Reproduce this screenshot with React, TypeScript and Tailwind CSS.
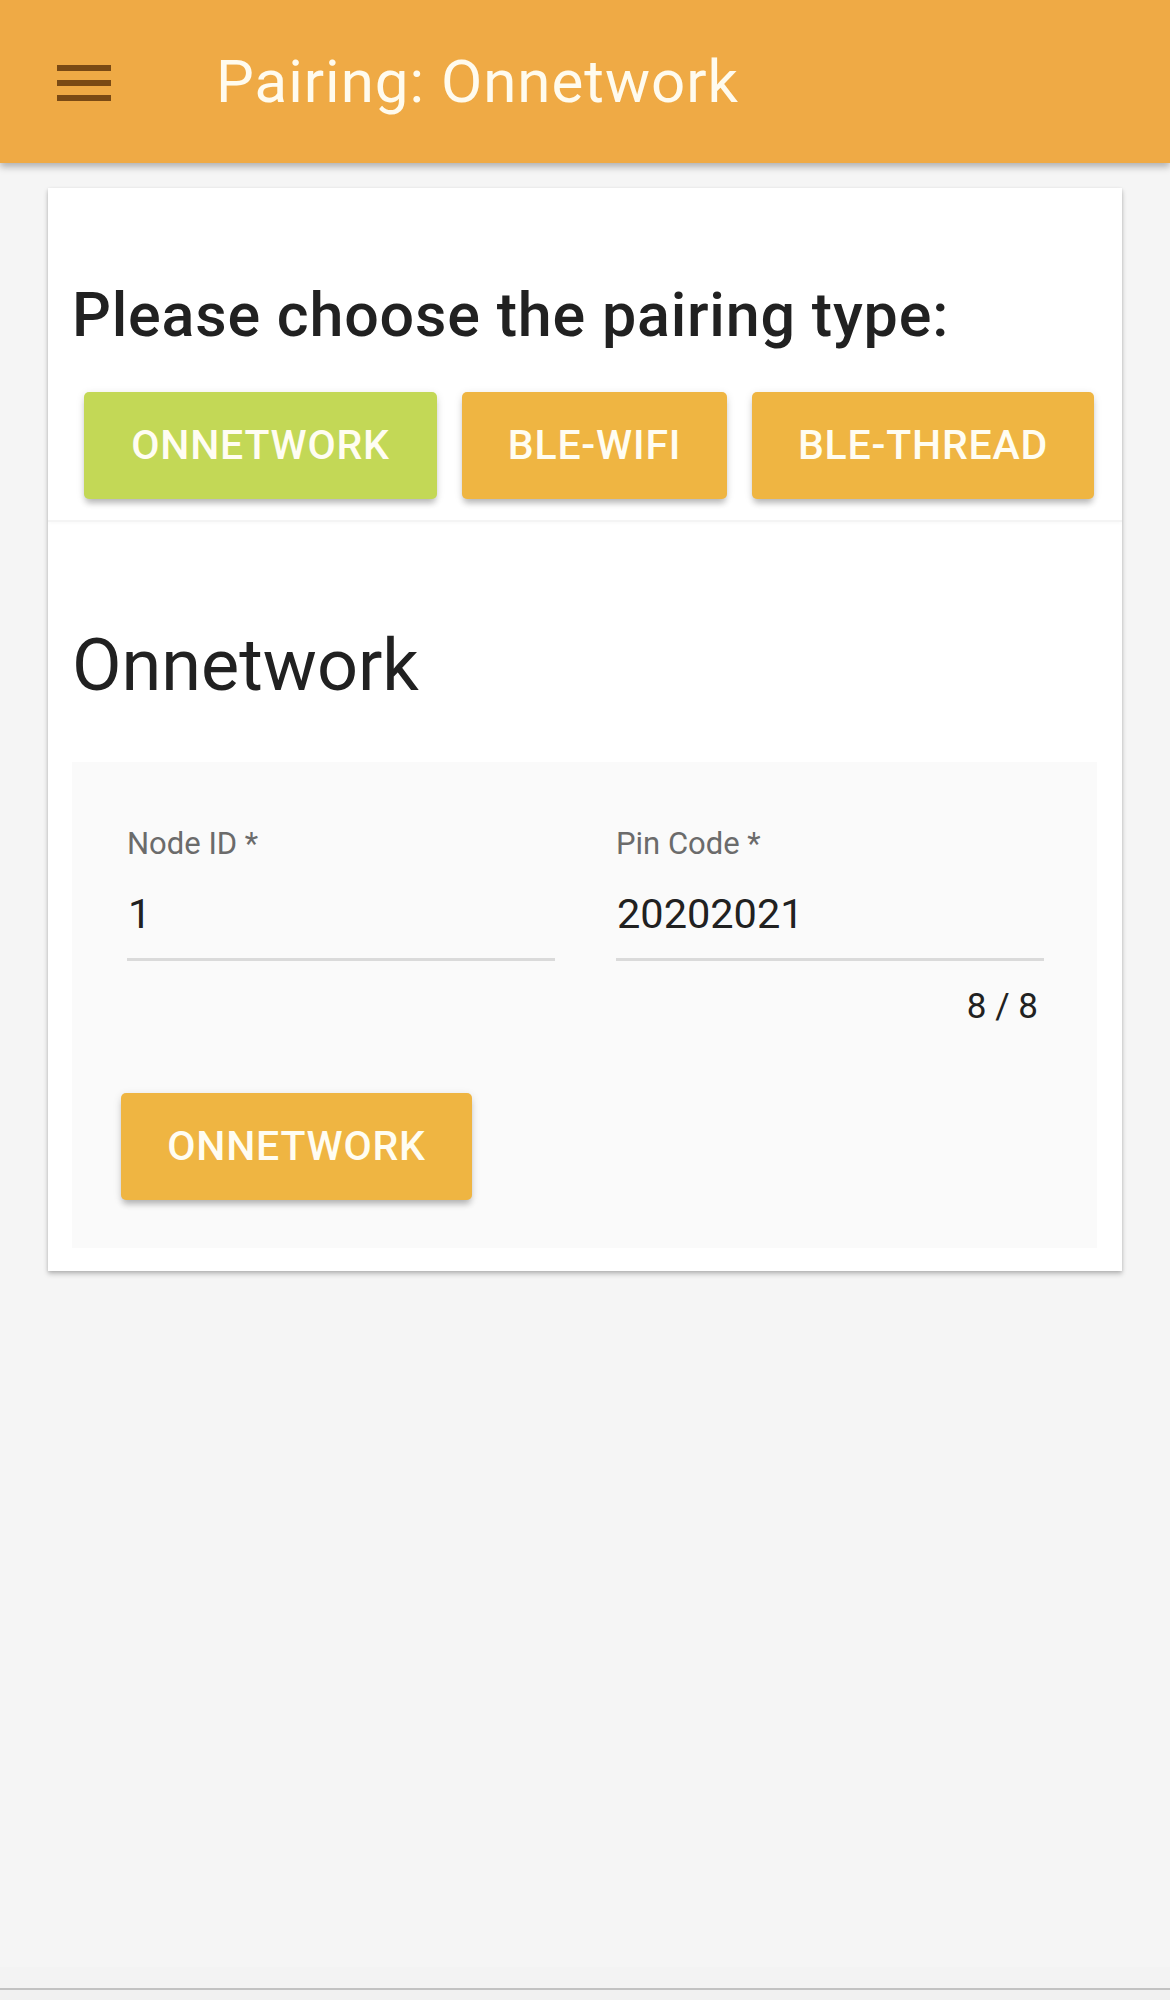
import React from "react";

const ff = { fontFamily: "Roboto, 'Noto Sans', 'Liberation Sans', sans-serif" };

function TypeButton({ label, w, green }: { label: string; w: string; green?: boolean }) {
  return (
    <button
      className={`${w} h-[107px] rounded-[5px] flex items-center justify-center text-[41px] leading-none font-medium tracking-[0.8px] text-[#fffdf2] shadow-[0_6px_6px_-2px_rgba(0,0,0,0.22),0_2px_8px_rgba(0,0,0,0.12)] ${
        green ? "bg-[#c3d856]" : "bg-[#efb542]"
      }`}
    >
      {label}
    </button>
  );
}

function Field({ label, value, helper }: { label: string; value: string; helper?: string }) {
  return (
    <div className="w-[428px] flex flex-col">
      <div className="text-[31px] leading-[33px] text-[#6b6b6b]">{label}</div>
      <div className="mt-[33px] pb-[23px] border-b-[3px] border-[#dadada]">
        <div className="text-[41.5px] leading-[42px] text-[#212121] pl-[1px]">{value}</div>
      </div>
      {helper && (
        <div className="mt-[28px] text-[35px] leading-[35px] text-[#212121] text-right pr-[6px]">{helper}</div>
      )}
    </div>
  );
}

export default function App() {
  return (
    <div className="w-[1170px] h-[2000px] bg-[#f5f5f5] flex flex-col" style={ff}>
      <header className="h-[163px] shrink-0 bg-[#efaa45] flex items-center shadow-[0_4px_7px_rgba(0,0,0,0.28)] relative z-10">
        <div className="ml-[57px] mt-[2px] flex flex-col gap-[9px]">
          <div className="w-[54px] h-[6px] bg-[#7a4a14]" />
          <div className="w-[54px] h-[6px] bg-[#7a4a14]" />
          <div className="w-[54px] h-[6px] bg-[#7a4a14]" />
        </div>
        <h1 className="ml-[105px] text-[60px] leading-[60px] font-normal tracking-[1px] text-[#fffbee]">Pairing: Onnetwork</h1>
      </header>

      <div className="mx-[48px] mt-[25px] w-[1074px] bg-white shadow-[0_3px_5px_rgba(0,0,0,0.22),0_1px_3px_rgba(0,0,0,0.1)]">
        <div className="pt-[97px] pb-[21px] border-b-[2px] border-[#f4f4f4] shadow-[0_2px_3px_rgba(0,0,0,0.02)]">
          <h2 className="pl-[24px] text-[61px] leading-[60px] font-medium tracking-[0.8px] text-[#212121]">
            Please choose the pairing type:
          </h2>
          <div className="mt-[47px] ml-[36px] flex gap-[25px]">
            <TypeButton label="ONNETWORK" w="w-[353px]" green />
            <TypeButton label="BLE-WIFI" w="w-[265px]" />
            <TypeButton label="BLE-THREAD" w="w-[342px]" />
          </div>
        </div>

        <div className="pt-[108px] px-[24px] pb-[23px]">
          <h3 className="text-[72px] leading-[72px] font-normal text-[#212121]">Onnetwork</h3>
          <div className="mt-[60px] w-[1025px] bg-[#fafafa] pt-[65px] pb-[48px] pl-[55px]">
            <div className="flex gap-[61px] items-start">
              <Field label="Node ID *" value="1" />
              <Field label="Pin Code *" value="20202021" helper="8 / 8" />
            </div>
            <div className="mt-[69px] -ml-[6px]">
              <TypeButton label="ONNETWORK" w="w-[351px]" />
            </div>
          </div>
        </div>
      </div>

      <div className="flex-1" />
      <div className="h-[21px] bg-[#f3f3f3]" />
      <div className="h-[2px] bg-[#c2c2c2]" />
      <div className="h-[10px] bg-[#f1f1f1]" />
    </div>
  );
}
